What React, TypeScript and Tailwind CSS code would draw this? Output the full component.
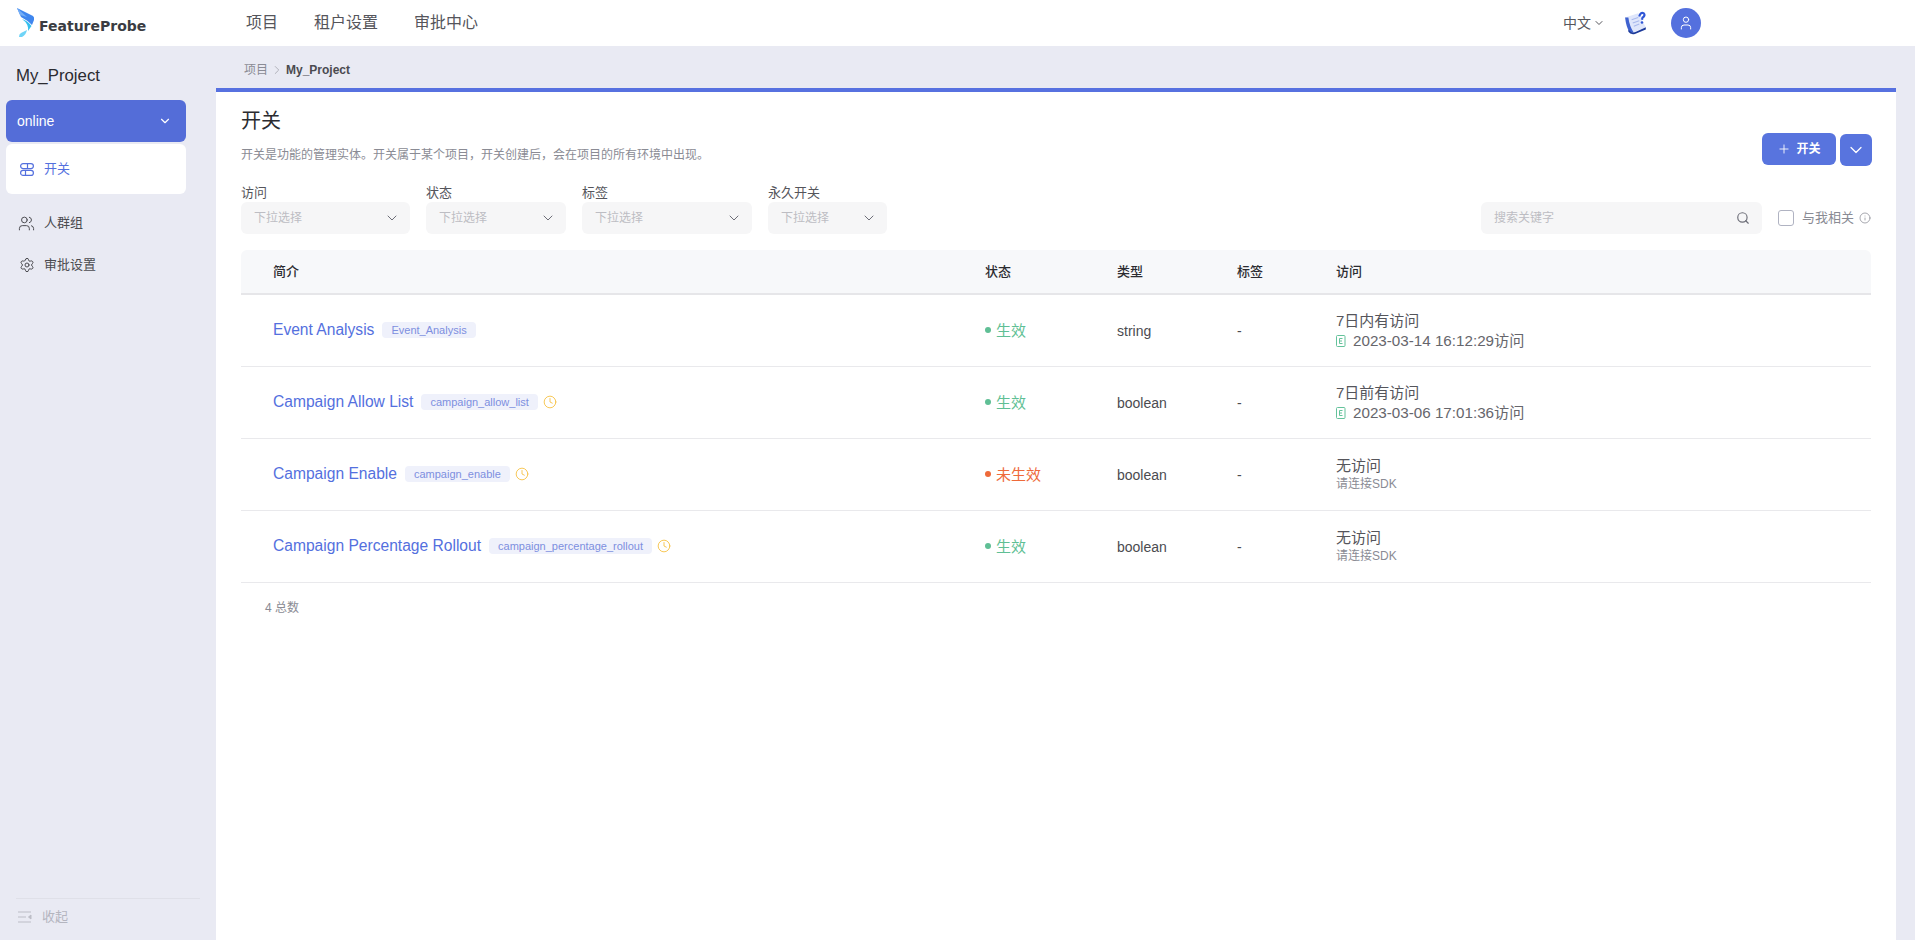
import React from 'react';
import { ChevronDown, ChevronRight, Clock, Info, Plus, Search, Settings, User, Users } from 'lucide-react';

const FONT = 'font-["Liberation_Sans","Noto_Sans_CJK_SC",sans-serif]';

type Row = {
  name: string;
  keyName: string;
  pending: boolean;
  active: boolean;
  type: string;
  visit: string;
  detail: string;
  hasSdk: boolean;
};

const rows: Row[] = [
  { name: 'Event Analysis', keyName: 'Event_Analysis', pending: false, active: true, type: 'string', visit: '7日内有访问', detail: '2023-03-14 16:12:29访问', hasSdk: true },
  { name: 'Campaign Allow List', keyName: 'campaign_allow_list', pending: true, active: true, type: 'boolean', visit: '7日前有访问', detail: '2023-03-06 17:01:36访问', hasSdk: true },
  { name: 'Campaign Enable', keyName: 'campaign_enable', pending: true, active: false, type: 'boolean', visit: '无访问', detail: '请连接SDK', hasSdk: false },
  { name: 'Campaign Percentage Rollout', keyName: 'campaign_percentage_rollout', pending: true, active: true, type: 'boolean', visit: '无访问', detail: '请连接SDK', hasSdk: false },
];

const filters = [
  { label: '访问', width: 'w-[169px]' },
  { label: '状态', width: 'w-[140px]' },
  { label: '标签', width: 'w-[170px]' },
  { label: '永久开关', width: 'w-[119px]' },
];

function Logo() {
  return (
    <svg width="19" height="30" viewBox="0 0 19 30" fill="none">
      <path d="M1 0 L17 8 Q18.5 9 18 12 L16 17 Q11 12 5 9 Z" fill="#3f86ee" />
      <path d="M1 0 L4 7 L11 9 Z" fill="#74aef6" />
      <path d="M6 11 Q12 13 15.5 18 L12 23 Q13 16 6 11 Z" fill="#36c0ee" />
      <path d="M3 29 Q3 26 5 25 L11 22 Q10 27 6 29 Z" fill="#6fd4f7" />
    </svg>
  );
}

function HelpNote() {
  return (
    <svg width="24" height="24" viewBox="0 0 22 22" fill="none">
      <path d="M1 6 L13 2 L20 15 L8 20 Q5 21 4 18 Z" fill="#dfe6fb" />
      <path d="M1 6 Q2 15 5 19 L9 20 Q5 14 4 6 Z" fill="#3f62cf" />
      <path d="M4 17 Q7 21 11 19 L20 15 L20 17 L10 21 Q6 22 4 19 Z" fill="#1c3a9a" />
      <path d="M7 8 L13 6 M8 11 L14 9 M9 14 L14 12" stroke="#a9b9ec" strokeWidth="1" />
      <path d="M14 5 Q15 1 18 2 Q20 4 17 6 L16.5 8" stroke="#2f56d6" strokeWidth="2" fill="none" />
      <circle cx="16.5" cy="10.5" r="1.2" fill="#2f56d6" />
    </svg>
  );
}

function ToggleIcon() {
  return (
    <svg width="14" height="13" viewBox="0 0 14 13" fill="none" stroke="#5470de" strokeWidth="1.2">
      <rect x="0.6" y="0.6" width="12.8" height="5" rx="2.5" />
      <rect x="0.6" y="7.4" width="12.8" height="5" rx="2.5" />
      <line x1="7.5" y1="0.6" x2="7.5" y2="5.6" />
      <line x1="5.5" y1="7.4" x2="5.5" y2="12.4" />
    </svg>
  );
}

function CollapseIcon() {
  return (
    <svg width="14" height="12" viewBox="0 0 14 12" fill="none" stroke="#bcbdc6" strokeWidth="1">
      <line x1="0" y1="1" x2="13" y2="1" />
      <line x1="0" y1="6" x2="8" y2="6" />
      <line x1="0" y1="11" x2="13" y2="11" />
      <path d="M13 4 L10.5 6 L13 8 Z" fill="#bcbdc6" />
    </svg>
  );
}

function SdkIcon() {
  return (
    <svg width="10" height="12" viewBox="0 0 10 12" fill="none" stroke="#64c29b" strokeWidth="1">
      <rect x="0.5" y="0.5" width="8.5" height="11" rx="1" />
      <path d="M6.5 3.5 H3.5 V8.5 H6.5 M3.5 6 H6" />
    </svg>
  );
}

export default function App() {
  return (
    <div className={`h-screen flex flex-col bg-[#e9eaf3] overflow-hidden text-[#4b4b50] ${FONT}`}>
      {/* Top bar */}
      <header className="h-[46px] shrink-0 bg-white flex items-center">
        <div className="w-[246px] pl-4 flex items-center shrink-0">
          <Logo />
          <span className="ml-[4px] mt-[6px] text-[14px] leading-none font-bold text-[#3a3c42] font-['DejaVu_Sans',sans-serif]">
            FeatureProbe
          </span>
        </div>
        <nav className="flex items-center gap-9 text-base text-[#55555b]">
          <span>项目</span>
          <span>租户设置</span>
          <span>审批中心</span>
        </nav>
        <div className="ml-auto flex items-center pr-[214px]">
          <span className="text-sm text-[#55555b]">中文</span>
          <ChevronDown className="w-3 h-3 ml-[2px] text-[#55555b]" />
          <span className="ml-[19px] flex"><HelpNote /></span>
          <span className="ml-[23px] w-[30px] h-[30px] rounded-full bg-[#5470de] flex items-center justify-center">
            <User className="w-4 h-4 text-white" strokeWidth={1.5} />
          </span>
        </div>
      </header>

      <div className="flex-1 flex min-h-0">
        {/* Sidebar */}
        <aside className="w-[216px] shrink-0 flex flex-col">
          <div className="pl-4 pt-[20px] pb-[14px] text-[16.8px] leading-5 text-[#2b2b30]">My_Project</div>
          <div className="mx-[6px] w-[180px] h-[42px] rounded-md bg-[#546dd8] text-white text-sm flex items-center justify-between pl-[11px] pr-[14px]">
            <span>online</span>
            <ChevronDown className="w-[14px] h-[14px]" />
          </div>
          <div className="mx-[6px] mt-[2px] w-[180px] h-[50px] rounded-md bg-white flex items-center pl-[14px] text-[13px] text-[#5470de] gap-[10px]">
            <ToggleIcon />
            <span className="-mt-px">开关</span>
          </div>
          <div className="pl-[18px] mt-[19px] flex items-center gap-[9px] text-[13px] h-5 text-[#4b4b50]">
            <Users className="w-[17px] h-[17px]" strokeWidth={1.4} />
            <span>人群组</span>
          </div>
          <div className="pl-[19px] mt-[22px] flex items-center gap-[9px] text-[13px] h-5 text-[#4b4b50]">
            <Settings className="w-4 h-4" strokeWidth={1.5} />
            <span>审批设置</span>
          </div>
          <div className="mt-auto mx-4 mb-[15px] border-t border-[#dfe0e8] pt-[10px] pl-[2px] h-[27px] flex items-center text-[13px] text-[#b4b5bf] gap-[10px]">
            <CollapseIcon />
            <span>收起</span>
          </div>
        </aside>

        {/* Main column */}
        <main className="w-[1680px] shrink-0 flex flex-col">
          <div className="h-[42px] shrink-0 pl-[28px] pt-[6px] flex items-center text-xs text-[#8a8b94]">
            <span>项目</span>
            <ChevronRight className="w-[14px] h-[14px] mx-[2px] text-[#a9aab2]" strokeWidth={1.5} />
            <span className="font-bold text-[#4b4b50]">My_Project</span>
          </div>
          <div className="flex-1 bg-white border-t-4 border-[#5771e0] px-[25px]">
            <div className="flex justify-between items-start">
              <div>
                <h1 className="pt-[14px] text-xl leading-[30px] text-[#2b2b30]">开关</h1>
                <p className="mt-[11px] text-xs leading-[16px] text-[#8a8b94]">开关是功能的管理实体。开关属于某个项目，开关创建后，会在项目的所有环境中出现。</p>
              </div>
              <div className="flex gap-1 pt-[41px]">
                <button className="w-[74px] h-8 rounded-md bg-[#5874de] text-white text-xs font-bold flex items-center justify-center gap-[5px]">
                  <Plus className="w-[14px] h-[14px]" strokeWidth={1.5} />
                  <span>开关</span>
                </button>
                <button className="w-8 h-8 mt-px -mr-px rounded-md bg-[#5874de] text-white flex items-center justify-center">
                  <ChevronDown className="w-5 h-5" strokeWidth={1.5} />
                </button>
              </div>
            </div>

            {/* Filters */}
            <div className="flex items-end mt-[18px]">
              <div className="flex gap-4">
                {filters.map((f) => (
                  <div key={f.label} className={f.width}>
                    <div className="text-[13px] leading-[18px] text-[#55555b]">{f.label}</div>
                    <div className="h-8 rounded-md bg-[#f6f6f7] flex items-center justify-between pl-[13px] pr-[10px] text-xs text-[#bdbdc3]">
                      <span>下拉选择</span>
                      <ChevronDown className="w-4 h-4 text-[#6d6e78]" strokeWidth={1.5} />
                    </div>
                  </div>
                ))}
              </div>
              <div className="ml-auto flex items-center">
                <div className="w-[281px] h-8 rounded-md bg-[#f6f6f7] flex items-center justify-between pl-[13px] pr-[12px] text-xs text-[#bdbdc3]">
                  <span>搜索关键字</span>
                  <Search className="w-[14px] h-[14px] text-[#6d6e78]" />
                </div>
                <span className="ml-4 w-4 h-4 rounded-[3px] border border-[#b0b3c2] bg-white" />
                <span className="ml-2 text-[13px] text-[#8a8b94]">与我相关</span>
                <Info className="ml-[5px] w-3 h-3 text-[#8a8b94]" strokeWidth={1.5} />
              </div>
            </div>

            {/* Table */}
            <div className="mt-[16px]">
              <div className="h-[45px] grid grid-cols-[744px_132px_120px_99px_1fr] items-center bg-[#f7f8fa] rounded-t-md border-b-2 border-[#e6e6e9] text-[13px] font-medium text-[#2b2b30]">
                <span className="pl-8">简介</span>
                <span>状态</span>
                <span>类型</span>
                <span>标签</span>
                <span>访问</span>
              </div>
              {rows.map((r) => (
                <div key={r.keyName} className="h-[72px] grid grid-cols-[744px_132px_120px_99px_1fr] items-center border-b border-[#e9e9ec] text-sm text-[#4b4b50]">
                  <div className="pl-8 flex items-center">
                    <span className="text-[15.6px] text-[#5470de]">{r.name}</span>
                    <span className="ml-2 h-4 px-[9px] rounded bg-[#eff1fb] text-[11px] leading-4 text-[#7d8fdf]">{r.keyName}</span>
                    {r.pending && <Clock className="ml-[5px] w-[14px] h-[14px] text-[#f6c040]" strokeWidth={1.5} />}
                  </div>
                  <div className={`flex items-center gap-[5px] text-[15px] ${r.active ? 'text-[#5fbf95]' : 'text-[#ee6a3a]'}`}>
                    <span className={`w-[6px] h-[6px] rounded-full ${r.active ? 'bg-[#5fbf95]' : 'bg-[#ee6a3a]'}`} />
                    <span>{r.active ? '生效' : '未生效'}</span>
                  </div>
                  <span>{r.type}</span>
                  <span>-</span>
                  <div>
                    <div className="text-[15px] leading-[20px] text-[#55555b]">{r.visit}</div>
                    {r.hasSdk ? (
                      <div className="flex items-center gap-[7px] text-[15.2px] leading-[20px] text-[#66666c]">
                        <SdkIcon />
                        <span>{r.detail}</span>
                      </div>
                    ) : (
                      <div className="text-xs leading-[17px] text-[#8a8b94]">{r.detail}</div>
                    )}
                  </div>
                </div>
              ))}
              <div className="pl-6 pt-[17px] text-xs leading-4 text-[#8a8b94]">4 总数</div>
            </div>
          </div>
        </main>
      </div>
    </div>
  );
}
